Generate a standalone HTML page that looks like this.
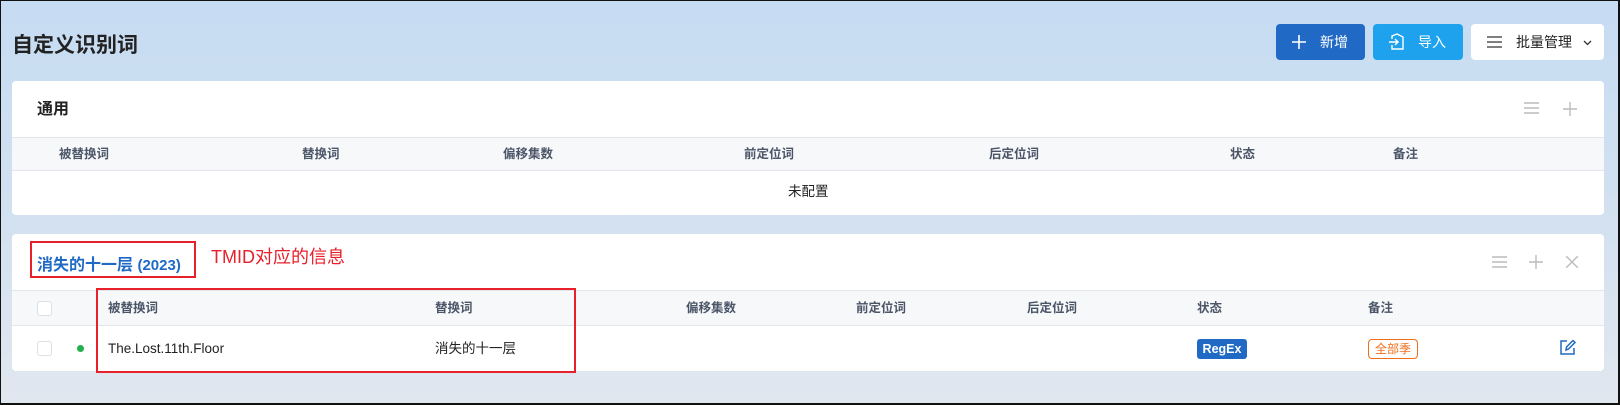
<!DOCTYPE html>
<html><head><meta charset="utf-8"><style>
*{margin:0;padding:0;box-sizing:border-box}
body{width:1620px;height:405px;overflow:hidden;position:relative;font-family:"Liberation Sans","Noto Sans CJK SC",sans-serif;background:linear-gradient(180deg,#c6dcf2 0%,#d3e1f0 55%,#e1e7ef 100%);border:2px solid #111;border-left-width:1px;border-top-width:1px}
.a{position:absolute}
.t{font-size:12.5px;color:#4a5568;font-weight:bold;white-space:nowrap;line-height:16px}
.d{font-size:13.5px;color:#222;white-space:nowrap;line-height:18px}
.card{position:absolute;left:11px;width:1592px;background:#fff;border-radius:4px}
.hr{position:absolute;left:0;right:0;background:#f7f8fa;border-top:1px solid #e3e5ea;border-bottom:1px solid #e3e5ea}
.btn{position:absolute;top:23px;height:36px;border-radius:4px;color:#fff;font-size:14px;display:flex;align-items:center}
.cb{position:absolute;width:15px;height:15px;border:1px solid #dcdfe5;border-radius:3px;background:#fff}
</style></head><body>
<div class="a" style="left:11px;top:28px;font-size:21px;font-weight:bold;color:#222">自定义识别词</div>

<div class="btn" style="left:1275px;width:89px;background:#206ac6">
<svg class="a" style="left:16px;top:11px" width="14" height="14"><path d="M7 0V14M0 7H14" stroke="#fff" stroke-width="1.6"/></svg>
<span class="a" style="left:44px">新增</span></div>
<div class="btn" style="left:1372px;width:90px;background:#1fa2ee">
<svg class="a" style="left:15px;top:9px" width="18" height="18" fill="none" stroke="#fff" stroke-width="1.4"><path d="M4 6V3L9 1L15 4V16H4V12"/><path d="M1 9H10M7 6L10 9L7 12"/></svg>
<span class="a" style="left:45px">导入</span></div>
<div class="btn" style="left:1470px;width:133px;background:#fff;color:#222">
<svg class="a" style="left:16px;top:12px" width="15" height="12"><path d="M0 1H15M0 6H15M0 11H15" stroke="#555" stroke-width="1.6"/></svg>
<span class="a" style="left:45px">批量管理</span>
<svg class="a" style="left:112px;top:16px" width="9" height="6"><path d="M1 1L4.5 4.5L8 1" stroke="#333" stroke-width="1.3" fill="none"/></svg></div>

<div class="card" style="top:80px;height:134px">
<div class="a" style="left:25px;top:14px;font-size:16px;font-weight:bold;color:#222">通用</div>
<svg class="a" style="left:1512px;top:21px" width="15" height="12"><path d="M0 1H15M0 6H15M0 11H15" stroke="#bbb" stroke-width="1.4"/></svg>
<svg class="a" style="left:1551px;top:21px" width="14" height="14"><path d="M7 0V14M0 7H14" stroke="#bbb" stroke-width="1.4"/></svg>
<div class="hr" style="top:56px;height:34px">
<span class="a t" style="left:47px;top:8px">被替换词</span>
<span class="a t" style="left:290px;top:8px">替换词</span>
<span class="a t" style="left:491px;top:8px">偏移集数</span>
<span class="a t" style="left:732px;top:8px">前定位词</span>
<span class="a t" style="left:977px;top:8px">后定位词</span>
<span class="a t" style="left:1218px;top:8px">状态</span>
<span class="a t" style="left:1381px;top:8px">备注</span>
</div>
<div class="a d" style="left:776px;top:102px">未配置</div>
</div>

<div class="card" style="top:233px;height:137px">
<div class="a" style="left:25px;top:17px;font-size:16px;font-weight:bold;color:#206ac6">消失的十一层 <span style="font-size:15px">(2023)</span></div>
<div class="a" style="left:199px;top:9px;font-size:18px;color:#e8202a">TMID对应的信息</div>
<svg class="a" style="left:1480px;top:22px" width="15" height="12"><path d="M0 1H15M0 6H15M0 11H15" stroke="#bbb" stroke-width="1.4"/></svg>
<svg class="a" style="left:1517px;top:21px" width="14" height="14"><path d="M7 0V14M0 7H14" stroke="#bbb" stroke-width="1.4"/></svg>
<svg class="a" style="left:1554px;top:22px" width="12" height="12"><path d="M0 0L12 12M12 0L0 12" stroke="#bbb" stroke-width="1.4"/></svg>
<div class="hr" style="top:56px;height:36px">
<div class="cb" style="left:25px;top:10px"></div>
<span class="a t" style="left:96px;top:9px">被替换词</span>
<span class="a t" style="left:423px;top:9px">替换词</span>
<span class="a t" style="left:674px;top:9px">偏移集数</span>
<span class="a t" style="left:844px;top:9px">前定位词</span>
<span class="a t" style="left:1015px;top:9px">后定位词</span>
<span class="a t" style="left:1185px;top:9px">状态</span>
<span class="a t" style="left:1356px;top:9px">备注</span>
</div>
<div class="cb" style="left:25px;top:107px"></div>
<div class="a" style="left:65px;top:111px;width:7px;height:7px;border-radius:50%;background:#21b04b"></div>
<div class="a d" style="left:96px;top:106px">The.Lost.11th.Floor</div>
<div class="a d" style="left:423px;top:106px">消失的十一层</div>
<div class="a" style="left:1185px;top:105px;width:50px;height:20px;background:#206ac6;border-radius:3px;color:#fff;font-size:12.5px;font-weight:bold;text-align:center;line-height:20px">RegEx</div>
<div class="a" style="left:1356px;top:105px;width:50px;height:20px;border:1px solid #f06d1a;border-radius:4px;color:#f06d1a;font-size:12px;text-align:center;line-height:18px">全部季</div>
<svg class="a" style="left:1547px;top:104px" width="18" height="18" fill="none" stroke="#206ac6" stroke-width="1.5"><path d="M8 3H2V16H15V10"/><path d="M7 12L7.5 9L14 2.5L16 4.5L9.5 11Z"/></svg>
</div>

<div class="a" style="left:29px;top:240px;width:166px;height:37px;border:2px solid #e8202a"></div>
<div class="a" style="left:95px;top:287px;width:480px;height:85px;border:2px solid #e8202a"></div>
</body></html>
